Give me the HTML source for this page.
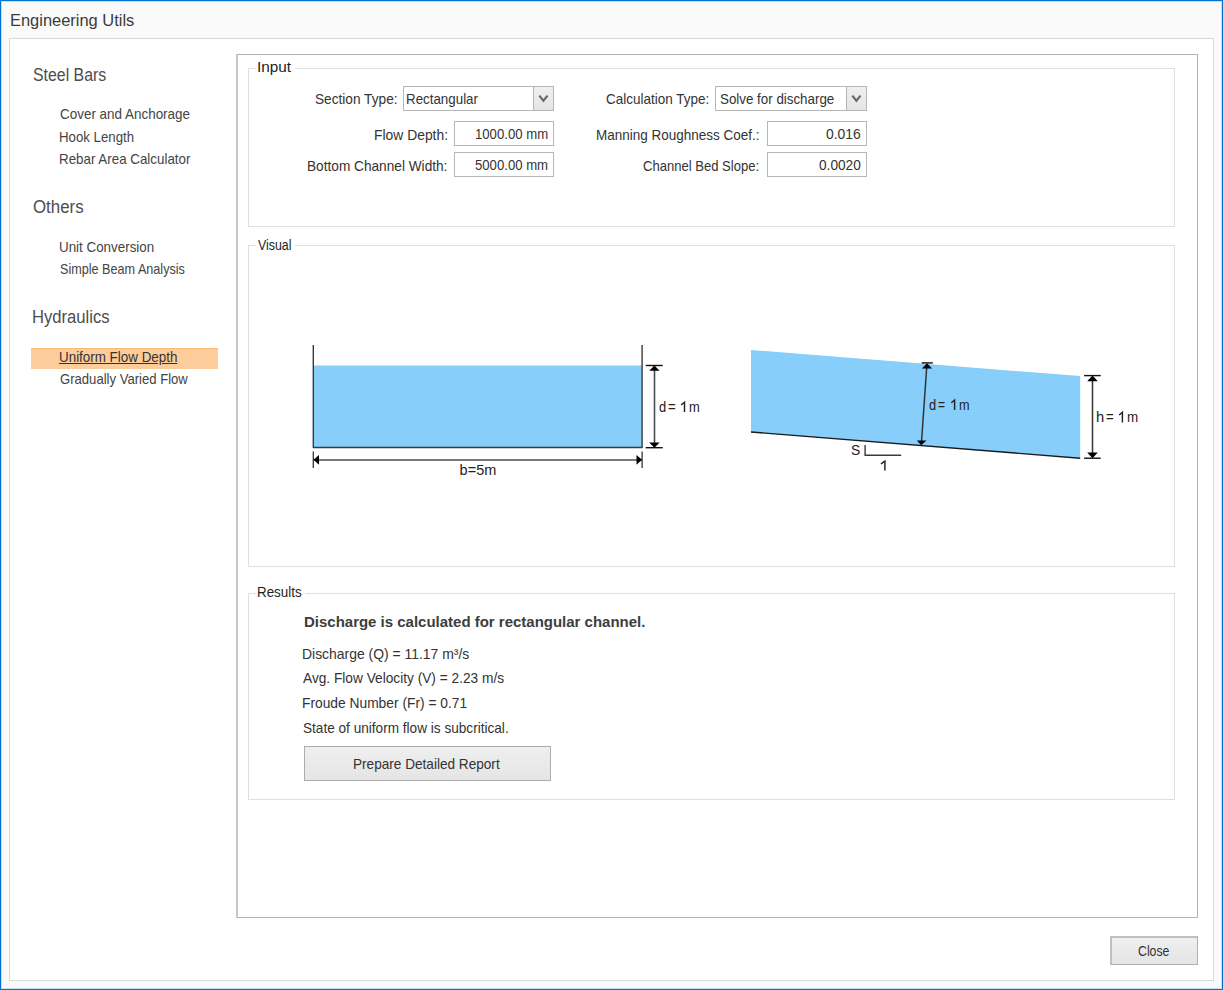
<!DOCTYPE html>
<html><head><meta charset="utf-8">
<style>
html,body{margin:0;padding:0;}
body{width:1223px;height:990px;position:relative;overflow:hidden;background:#fafafa;font-family:"Liberation Sans",sans-serif;color:#333;}
.a{position:absolute;box-sizing:border-box;}
.t{position:absolute;white-space:nowrap;line-height:1;transform-origin:0 0;}
#win{left:0;top:0;width:1223px;height:990px;border:1px solid #0074d0;box-shadow:inset 0 0 0 1px #c4dcf2;}
#panel{left:9px;top:38px;width:1205px;height:943px;border:1px solid #d9d9d9;background:#fff;}
#main{left:236px;top:54px;width:962px;height:864px;border:1px solid #b4b4b4;border-left:2px solid #c6c6c6;background:#fff;}
.grp{border:1px solid #dfdfdf;}
.gap{position:absolute;background:#fff;height:3px;}
.box{border:1px solid #b6b6b6;background:#fff;}
.cbtn{border-left:1px solid #b6b6b6;background:linear-gradient(#f0f0f0,#e4e4e4);}
.btn{border:1px solid #adadad;background:linear-gradient(#efefef,#e5e5e5);}
.hl{background:#fdcc9b;border-top:1px solid #ffb873;}
</style></head>
<body>
<div class="a" id="win"></div>
<div class="a" id="panel"></div>

<!-- sidebar highlight -->
<div class="a hl" style="left:31px;top:348px;width:187px;height:21px;"></div>

<div class="a" id="main"></div>

<!-- Input group -->
<div class="a grp" style="left:248px;top:68px;width:927px;height:159px;"></div>
<div class="gap" style="left:256px;top:67px;width:39px;"></div>
<!-- Visual group -->
<div class="a grp" style="left:248px;top:245px;width:927px;height:322px;"></div>
<div class="gap" style="left:256px;top:244px;width:39px;"></div>
<!-- Results group -->
<div class="a grp" style="left:248px;top:593px;width:927px;height:207px;"></div>
<div class="gap" style="left:256px;top:592px;width:49px;"></div>

<!-- combos -->
<div class="a box" style="left:403px;top:86px;width:151px;height:25px;"></div>
<div class="a cbtn" style="left:533px;top:87px;width:20px;height:23px;"></div>
<div class="a box" style="left:715px;top:86px;width:152px;height:25px;"></div>
<div class="a cbtn" style="left:846px;top:87px;width:20px;height:23px;"></div>
<!-- textboxes -->
<div class="a box" style="left:454px;top:121px;width:100px;height:25px;"></div>
<div class="a box" style="left:454px;top:152px;width:100px;height:25px;"></div>
<div class="a box" style="left:767px;top:121px;width:100px;height:25px;"></div>
<div class="a box" style="left:767px;top:152px;width:100px;height:25px;"></div>

<!-- buttons -->
<div class="a btn" style="left:304px;top:746px;width:247px;height:35px;"></div>
<div class="a btn" style="left:1110px;top:936px;width:88px;height:29px;border-color:#c0c0c0 #b0b0b0 #b0b0b0 #c0c0c0;border-width:2px 1px 1px 2px;"></div>

<svg class="a" style="left:0;top:0;" width="1223" height="990" viewBox="0 0 1223 990">
 <!-- chevrons -->
 <polyline points="539.3,95.6 543.4,100.8 547.5,95.6" fill="none" stroke="#6a6a6a" stroke-width="2.2"/>
 <polyline points="852.3,95.6 856.4,100.8 860.5,95.6" fill="none" stroke="#6a6a6a" stroke-width="2.2"/>

 <!-- rectangular channel -->
 <rect x="313.3" y="365.5" width="328.8" height="82" fill="#87cefa"/>
 <polyline points="313.3,345 313.3,447.5 642.1,447.5 642.1,345" fill="none" stroke="#3a3a3a" stroke-width="1.4" stroke-linejoin="round"/>
 <!-- b dim -->
 <line x1="313.5" y1="459.9" x2="642" y2="459.9" stroke="#7a7a7a" stroke-width="2"/>
 <line x1="313.3" y1="451.6" x2="313.3" y2="468.1" stroke="#333" stroke-width="1.3"/>
 <line x1="642.1" y1="451.6" x2="642.1" y2="468.1" stroke="#333" stroke-width="1.3"/>
 <polygon points="313.5,459.8 319,455 319,464.8" fill="#000"/>
 <polygon points="642,459.8 636.5,455 636.5,464.8" fill="#000"/>
 <!-- d dim -->
 <line x1="654.5" y1="366" x2="654.5" y2="447" stroke="#4a4a4a" stroke-width="1.6"/>
 <line x1="645.7" y1="365.5" x2="662.7" y2="365.5" stroke="#111" stroke-width="1.4"/>
 <line x1="645.7" y1="447.7" x2="662.7" y2="447.7" stroke="#111" stroke-width="1.4"/>
 <polygon points="654.4,365.5 649.2,370.7 659.6,370.7" fill="#000"/>
 <polygon points="654.4,447.7 649.2,442.5 659.6,442.5" fill="#000"/>

 <!-- sloped channel -->
 <polygon points="751,350 1080.2,376.1 1080.2,458.2 751,432" fill="#87cefa"/>
 <line x1="751" y1="432" x2="1080.2" y2="458.2" stroke="#1a1a1a" stroke-width="1.4"/>
 <!-- d perpendicular dim -->
 <line x1="926.8" y1="366" x2="921.5" y2="442" stroke="#333" stroke-width="1.5"/>
 <line x1="921.7" y1="362.9" x2="932.8" y2="362.9" stroke="#111" stroke-width="1.4"/>
 <polygon points="927,363.3 921.9,368.4 932.1,368.4" fill="#000"/>
 <polygon points="921.2,445.3 916.8,440.6 926.5,440.6" fill="#000"/>
 <!-- h dim -->
 <line x1="1092.5" y1="377" x2="1092.5" y2="457" stroke="#333" stroke-width="1.5"/>
 <line x1="1084.1" y1="375.6" x2="1100.7" y2="375.6" stroke="#111" stroke-width="1.4"/>
 <line x1="1084.1" y1="458.2" x2="1100.7" y2="458.2" stroke="#111" stroke-width="1.4"/>
 <polygon points="1092.5,375.6 1087.2,381.3 1097.8,381.3" fill="#000"/>
 <polygon points="1092.5,458.2 1087.2,452.6 1097.8,452.6" fill="#000"/>
 <!-- slope indicator -->
 <polyline points="865.1,444.9 865.1,455.3 901.2,455.3" fill="none" stroke="#3a3a3a" stroke-width="1.4"/>
 <!-- digit ones (no foot) -->
 <g stroke="#222" stroke-width="1.45" fill="none" stroke-linejoin="miter">
  <path d="M684.5,411.9 V402.3 L681.1,405"/>
  <path d="M954.6,409.9 V400.1 L951.3,402.8"/>
  <path d="M1122.4,422.5 V412.3 L1119.1,415"/>
  <path d="M884.9,470.4 V461.1 L881,463.8"/>
 </g>
</svg>

<div class="t" style="left:10.03px;top:11.61px;font-size:17.0px;color:#3b3b3b;transform:scaleX(0.9668);">Engineering Utils</div>
<div class="t" style="left:32.90px;top:66.69px;font-size:17.5px;color:#4d4d4d;transform:scaleX(0.9064);">Steel Bars</div>
<div class="t" style="left:59.60px;top:107.13px;font-size:14.5px;color:#444;transform:scaleX(0.9270);">Cover and Anchorage</div>
<div class="t" style="left:58.69px;top:130.39px;font-size:14.5px;color:#444;transform:scaleX(0.9130);">Hook Length</div>
<div class="t" style="left:58.68px;top:152.23px;font-size:14.5px;color:#444;transform:scaleX(0.9213);">Rebar Area Calculator</div>
<div class="t" style="left:32.90px;top:198.79px;font-size:17.5px;color:#4d4d4d;transform:scaleX(0.9627);">Others</div>
<div class="t" style="left:58.68px;top:239.93px;font-size:14.5px;color:#444;transform:scaleX(0.9227);">Unit Conversion</div>
<div class="t" style="left:59.60px;top:261.83px;font-size:14.5px;color:#444;transform:scaleX(0.8708);">Simple Beam Analysis</div>
<div class="t" style="left:32.25px;top:308.89px;font-size:17.5px;color:#4d4d4d;transform:scaleX(0.9489);">Hydraulics</div>
<div class="t" style="left:58.78px;top:349.83px;font-size:14.5px;color:#333;transform:scaleX(0.9240);text-decoration:underline;">Uniform Flow Depth</div>
<div class="t" style="left:59.70px;top:372.43px;font-size:14.5px;color:#444;transform:scaleX(0.9029);">Gradually Varied Flow</div>
<div class="t" style="left:256.94px;top:60.43px;font-size:14.5px;color:#1e1e1e;transform:scaleX(1.0570);">Input</div>
<div class="t" style="left:258.30px;top:237.75px;font-size:14.0px;color:#1e1e1e;transform:scaleX(0.8844);">Visual</div>
<div class="t" style="left:257.38px;top:585.23px;font-size:14.5px;color:#1e1e1e;transform:scaleX(0.9236);">Results</div>
<div class="t" style="left:314.70px;top:91.53px;font-size:14.5px;color:#333;transform:scaleX(0.9421);">Section Type:</div>
<div class="t" style="left:406.28px;top:91.53px;font-size:14.5px;color:#333;transform:scaleX(0.9204);">Rectangular</div>
<div class="t" style="left:373.74px;top:127.73px;font-size:14.5px;color:#333;transform:scaleX(0.9571);">Flow Depth:</div>
<div class="t" style="left:474.99px;top:126.73px;font-size:14.5px;color:#333;transform:scaleX(0.9067);">1000.00 mm</div>
<div class="t" style="left:307.36px;top:158.93px;font-size:14.5px;color:#333;transform:scaleX(0.9417);">Bottom Channel Width:</div>
<div class="t" style="left:475.00px;top:157.73px;font-size:14.5px;color:#333;transform:scaleX(0.9066);">5000.00 mm</div>
<div class="t" style="left:606.10px;top:91.53px;font-size:14.5px;color:#333;transform:scaleX(0.9301);">Calculation Type:</div>
<div class="t" style="left:719.90px;top:91.53px;font-size:14.5px;color:#333;transform:scaleX(0.9205);">Solve for discharge</div>
<div class="t" style="left:596.17px;top:127.73px;font-size:14.5px;color:#333;transform:scaleX(0.9298);">Manning Roughness Coef.:</div>
<div class="t" style="left:825.80px;top:126.73px;font-size:14.5px;color:#333;transform:scaleX(0.9580);">0.016</div>
<div class="t" style="left:643.40px;top:158.93px;font-size:14.5px;color:#333;transform:scaleX(0.9003);">Channel Bed Slope:</div>
<div class="t" style="left:818.80px;top:157.73px;font-size:14.5px;color:#333;transform:scaleX(0.9416);">0.0020</div>
<div class="t" style="left:303.93px;top:614.48px;font-size:15.5px;color:#3d3d3d;font-weight:700;transform:scaleX(0.9665);">Discharge is calculated for rectangular channel.</div>
<div class="t" style="left:302.24px;top:646.73px;font-size:14.5px;color:#333;transform:scaleX(0.9604);">Discharge (Q) = 11.17 m³/s</div>
<div class="t" style="left:303.20px;top:671.33px;font-size:14.5px;color:#333;transform:scaleX(0.9443);">Avg. Flow Velocity (V) = 2.23 m/s</div>
<div class="t" style="left:302.25px;top:696.43px;font-size:14.5px;color:#333;transform:scaleX(0.9508);">Froude Number (Fr) = 0.71</div>
<div class="t" style="left:303.20px;top:720.93px;font-size:14.5px;color:#333;transform:scaleX(0.9383);">State of uniform flow is subcritical.</div>
<div class="t" style="left:353.26px;top:756.53px;font-size:14.5px;color:#333;transform:scaleX(0.9380);">Prepare Detailed Report</div>
<div class="t" style="left:1137.80px;top:943.83px;font-size:14.5px;color:#333;transform:scaleX(0.8485);">Close</div>
<div class="t" style="left:459.60px;top:462.93px;font-size:14.5px;color:#222;">b=5m</div>
<div class="t" style="left:658.90px;top:399.63px;font-size:14.5px;color:#222;transform:scaleX(0.8875);">d</div>
<div class="t" style="left:667.70px;top:399.63px;font-size:14.5px;color:#222;transform:scaleX(0.9125);">=</div>
<div class="t" style="left:688.90px;top:399.63px;font-size:14.5px;color:#222;transform:scaleX(0.8917);">m</div>
<div class="t" style="left:928.90px;top:397.63px;font-size:14.5px;color:#222;transform:scaleX(0.8875);">d</div>
<div class="t" style="left:937.90px;top:397.63px;font-size:14.5px;color:#222;transform:scaleX(0.8375);">=</div>
<div class="t" style="left:958.90px;top:397.63px;font-size:14.5px;color:#222;transform:scaleX(0.8750);">m</div>
<div class="t" style="left:1095.89px;top:410.23px;font-size:14.5px;color:#222;transform:scaleX(1.0143);">h</div>
<div class="t" style="left:1105.50px;top:410.23px;font-size:14.5px;color:#222;transform:scaleX(0.9125);">=</div>
<div class="t" style="left:1126.50px;top:410.23px;font-size:14.5px;color:#222;transform:scaleX(0.9250);">m</div>
<div class="t" style="left:850.60px;top:443.43px;font-size:14.5px;color:#222;transform:scaleX(0.9556);">S</div>
</body></html>
